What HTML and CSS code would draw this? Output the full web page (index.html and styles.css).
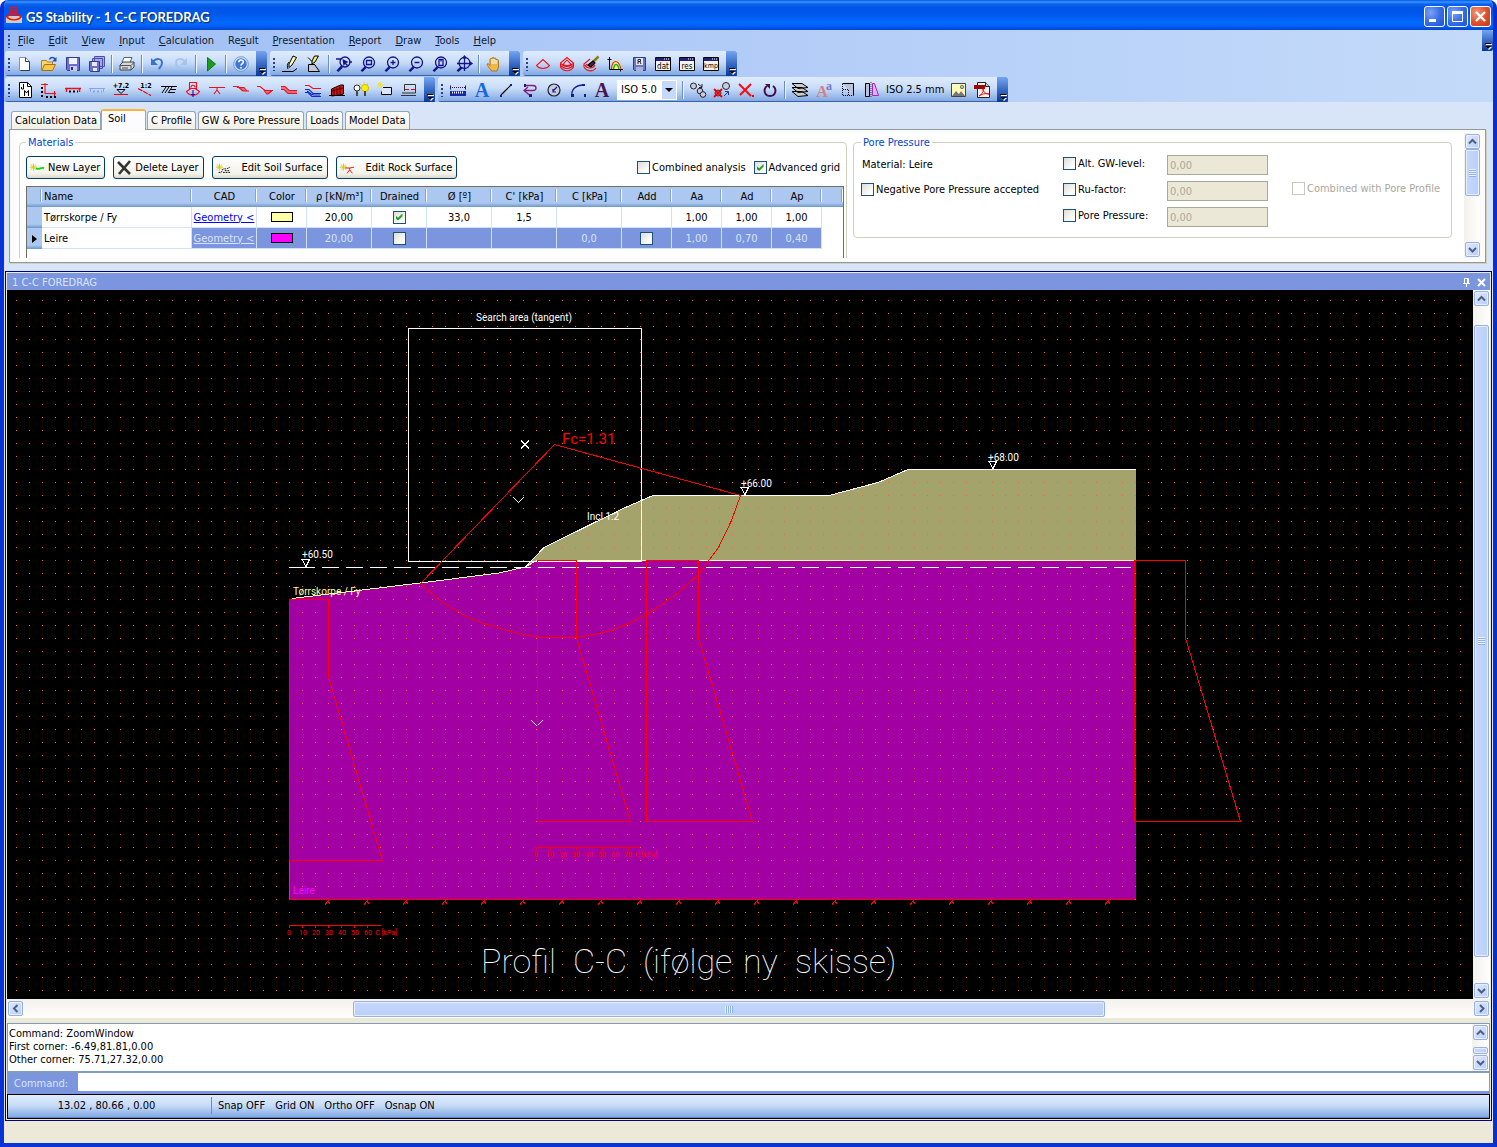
FILE: index.html
```html
<!DOCTYPE html>
<html lang="en">
<head>
<meta charset="utf-8">
<title>GS Stability - 1 C-C FOREDRAG</title>
<link rel="stylesheet" href="styles.css">
</head>
<body>
<div class="window">
  <header class="titlebar">
    <svg class="app-icon" viewBox="0 0 16 16"><path d="M0 9h16v7H0z" fill="#d0ccc4"/><path d="M4 .5h7v6H4zM5 7.500L.5 9.500c3 4.500 12 4.500 15 0L11 7.500zM5.500 6C6 2 10 2 10 6" fill="none" stroke="#f01010" stroke-width="1.400"/></svg>
    <h1>GS Stability - 1 C-C FOREDRAG</h1>
    <div class="win-buttons">
      <button class="win-btn" aria-label="Minimize"><svg viewBox="0 0 19 19"><path d="M4 12h7v3H4z" fill="#fff"/></svg></button>
      <button class="win-btn" aria-label="Maximize"><svg viewBox="0 0 19 19"><path d="M4.500 5v9.500h10V5" fill="none" stroke="#fff"/><path d="M4 4h11v3H4z" fill="#fff"/></svg></button>
      <button class="win-btn close" aria-label="Close"><svg viewBox="0 0 19 19"><path d="M5 5l9 9M14 5l-9 9" stroke="#fff" stroke-width="2.400"/></svg></button>
    </div>
  </header>

  <div class="chrome">
    <nav class="menubar">
      <span class="grip"></span>
      <a href="#"><u>F</u>ile</a><a href="#"><u>E</u>dit</a><a href="#"><u>V</u>iew</a><a href="#"><u>I</u>nput</a><a href="#"><u>C</u>alculation</a><a href="#">Re<u>s</u>ult</a><a href="#"><u>P</u>resentation</a><a href="#"><u>R</u>eport</a><a href="#"><u>D</u>raw</a><a href="#"><u>T</u>ools</a><a href="#"><u>H</u>elp</a>
      <button class="overflow" aria-label="Menu options"></button>
    </nav>

    <div class="toolrow">
      <div class="toolbar">
        <span class="grip"></span>
        <button aria-label="New"><svg viewBox="0 0 16 16"><path d="M2.500 1.500h6l4 4v9h-10z" fill="#fff" stroke="#8a94a8"/><path d="M8.500 1.500v4h4M12.500 6v8.500h-9" fill="none" stroke="#333c55"/></svg></button>
        <button aria-label="Open"><svg viewBox="0 0 16 16"><path d="M.5 14V4.500h5l1 1.500h5v3" fill="#f7d673" stroke="#b87f1c"/><path d="M.8 14.500L3.500 8.500h11l-3 6z" fill="#f9c648" stroke="#a8701a"/><path d="M8.500 3.500c1-2.500 4-2.500 5.500-.5" fill="none" stroke="#1b4fae" stroke-width="1.500"/><path d="M15.500 1v4.500H11z" fill="#1b4fae"/></svg></button>
        <button aria-label="Save"><svg viewBox="0 0 16 16"><path d="M1.500 1.500h13v13h-12l-1-1z" fill="#6a6fd0" stroke="#33389a"/><path d="M4 2h8v6H4z" fill="#f2f4ff"/><path d="M5 10h7v5H5z" fill="#c6cbe8"/><path d="M6 11h2v3H6z" fill="#262b86"/></svg></button>
        <button aria-label="Save all"><svg viewBox="0 0 16 16"><path d="M5.500 .5h10v10h-10zM3.500 2.500h10v10h-10z" fill="#a4a8e4" stroke="#4a4fa8"/><path d="M.5 5.500h10v10h-9l-1-1z" fill="#6a6fd0" stroke="#33389a"/><path d="M3 6h5v4H3zM4 12h4v3H4z" fill="#e8eaff"/></svg></button>
        <span class="sep"></span>
        <button aria-label="Print"><svg viewBox="0 0 16 16"><path d="M5 1.500h8l-2 5H3z" fill="#fff" stroke="#555c6e"/><path d="M1 9l3-3h11v5l-3 3H1z" fill="#d8d8d2" stroke="#3d424f"/><path d="M1 9.500h11M12 9.500l3-3M12 10v4M3 12h6" stroke="#4e5462" fill="none"/></svg></button>
        <span class="sep"></span>
        <button aria-label="Undo"><svg viewBox="0 0 16 16"><path d="M4 6c3-4 9-4 9 1 0 3-2 4-3 6" fill="none" stroke="#3d72cc" stroke-width="2"/><path d="M2 2v7h7z" fill="#3d72cc"/></svg></button>
        <button aria-label="Redo"><svg viewBox="0 0 16 16"><path d="M12 6C9 2 3 2 3 7c0 3 2 4 3 6" fill="none" stroke="#a8c4ee" stroke-width="2"/><path d="M14 2v7H7z" fill="#a8c4ee"/></svg></button>
        <span class="sep"></span>
        <button aria-label="Run"><svg viewBox="0 0 16 16"><path d="M4.500 1.500l8 6.500-8 7z" fill="#1f9a1f" stroke="#0a7a0a"/></svg></button>
        <span class="sep"></span>
        <button aria-label="Help"><svg viewBox="0 0 16 16"><circle cx="8" cy="8" r="6.500" fill="#3f78d6" stroke="#d3e2f8" stroke-width="1.500"/><circle cx="8" cy="8" r="7.300" fill="none" stroke="#5a7fc4" stroke-width=".7"/><path d="M5.800 6.300c0-3 4.500-3 4.500-.3C10.300 8 8 7.800 8 9.600M8 11v1.500" fill="none" stroke="#fff" stroke-width="1.600"/></svg></button>
        <button class="overflow" aria-label="Toolbar options"></button>
      </div>
      <div class="toolbar">
        <span class="grip"></span>
        <button aria-label="Draw line"><svg viewBox="0 0 16 16"><path d="M0 15.500h11l4-3" fill="none" stroke="#000"/><path d="M11 0l3.500 1.500L10 9l-3 2.500V8z" fill="#fff9a8" stroke="#000"/><path d="M7 6c-2 2-2 5-1 7" fill="none" stroke="#000"/></svg></button>
        <button aria-label="Draw surface"><svg viewBox="0 0 16 16"><path d="M2.500 15.500V8.500h6l5 7z" fill="#c4c9d6" stroke="#000"/><path d="M8.500 0h4L9 6l-3 2V5z" fill="#f5ee6a" stroke="#000"/><path d="M2 1.500l4 4M8 8l2 2" stroke="#000" fill="none"/></svg></button>
        <span class="sep"></span>
        <button aria-label="Zoom window"><svg viewBox="0 0 16 16" class="lens"><circle cx="9" cy="6" r="5"/><path d="M5.500 10L1 15M2 15.500L6.500 11M0 3h5M13 6h3"/><path class="solid" d="M6.500 3l1 7 1.500-2 2 2 1-1-2-2 2.500-1z"/></svg></button>
        <button aria-label="Zoom extents"><svg viewBox="0 0 16 16" class="lens"><circle cx="9" cy="6.500" r="5.500"/><path d="M5.500 10.500L1 15M2 15.500L6.500 11M6.500 4.500h5v4h-5z"/></svg></button>
        <button aria-label="Zoom in"><svg viewBox="0 0 16 16" class="lens"><circle cx="9" cy="6.500" r="5.500"/><path d="M5.500 10.500L1 15M2 15.500L6.500 11M9 4v5M6.500 6.500h5"/></svg></button>
        <button aria-label="Zoom out"><svg viewBox="0 0 16 16" class="lens"><circle cx="9" cy="6.500" r="5.500"/><path d="M5.500 10.500L1 15M2 15.500L6.500 11M6.500 6.500h5"/></svg></button>
        <button aria-label="Zoom page"><svg viewBox="0 0 16 16" class="lens"><circle cx="9" cy="6.500" r="5.500"/><path d="M5.500 10.500L1 15M2 15.500L6.500 11M7 3.500h4v6H7zM9 3.500v2"/></svg></button>
        <button aria-label="Zoom all"><svg viewBox="0 0 16 16" class="lens"><circle cx="8.500" cy="7" r="5.500"/><path d="M5 11L1 15M2 15.500L6.500 11.500M8.500 0v15M1 7.500h15M7 2l1.500-2L10 2M14 6l2 1.500L14 9"/></svg></button>
        <span class="sep"></span>
        <button aria-label="Pan"><svg viewBox="0 0 16 16"><path d="M5 14C3 12 1.500 9.500 1 8c1-.8 2 0 3 1.500V3c1-1 2-.5 2 0v-1c1-1 2-.5 2 0v.5c1-.8 2-.5 2 .5v1c1-.8 2.500-.5 2.500.5V11l-1.500 4H5.500z" fill="#f0b84a" stroke="#a8782a"/><path d="M6 3v5M8 3v5M10 4v4" stroke="#fff" fill="none"/></svg></button>
        <button class="overflow" aria-label="Toolbar options"></button>
      </div>
      <div class="toolbar">
        <span class="grip"></span>
        <button aria-label="Search area"><svg viewBox="0 0 16 16" class="red"><path d="M8 3.500L1.500 9.500c3 4 10 4 13 0z"/></svg></button>
        <button aria-label="Surfaces"><svg viewBox="0 0 16 16" class="red"><path d="M8 1.500L1.500 7v4c3 5 10 5 13 0V7zM8 4L4 8.500c2 1.500 6 1.500 8 0zM2 9.500c3 4 9 4 12 0M2 7.500c3 4 9 4 12 0"/></svg></button>
        <button aria-label="Edit surfaces"><svg viewBox="0 0 16 16" class="red"><path d="M7 3L1 8v3c3 5 9 5 12 1M2 9c2 4 8 4 10 0M3 8c2 3 6 3 8 0"/><path class="brush" d="M15.500 .5L10 6"/><path class="bristle" d="M10 5l-5 4 3 2 4-4z"/></svg></button>
        <button aria-label="Distribution"><svg viewBox="0 0 16 16"><path d="M2.500 1v12.500H16M.5 3.500h4M13.500 11.500v4" fill="none" stroke="#000"/><path d="M4 13c1-11 8-11 11 0z" fill="#ff6"/><path d="M4.500 13c1-10 7-10 9.500 0" fill="none" stroke="#f02020" stroke-width="1.200"/><path d="M6.500 13c1-6 4-6 5.500 0" fill="none" stroke="#10b040" stroke-width="1.500"/></svg></button>
        <button aria-label="Save result"><svg viewBox="0 0 16 16"><path d="M2.500 1.500h12v13h-11l-1-1z" fill="#6c78c4" stroke="#303a90"/><path d="M5 2h7v7H5z" fill="#e4e8f8"/><path d="M7 8V3.500h2.500v2H7M9 6l1 2" stroke="#222" fill="none"/><path d="M5 11h7v4H5z" fill="#aab2d8"/></svg></button>
        <button aria-label="Data file"><svg viewBox="0 0 16 16"><path d="M.5 1.500h15v13H.5z" fill="#f4f4ec" stroke="#000"/><path d="M1 2h14v3H1z" fill="#22227a"/><path d="M9 3h1M11 3h1M13 3h1" stroke="#fff"/><text x="8" y="13" class="file-tag">dat</text></svg></button>
        <button aria-label="Result file"><svg viewBox="0 0 16 16"><path d="M.5 1.500h15v13H.5z" fill="#f4f4ec" stroke="#000"/><path d="M1 2h14v3H1z" fill="#22227a"/><path d="M9 3h1M11 3h1M13 3h1" stroke="#fff"/><text x="8" y="13" class="file-tag">res</text></svg></button>
        <button aria-label="Kmp file"><svg viewBox="0 0 16 16"><path d="M.5 1.500h15v13H.5z" fill="#f4f4ec" stroke="#000"/><path d="M1 2h14v3H1z" fill="#22227a"/><path d="M9 3h1M11 3h1M13 3h1" stroke="#fff"/><text x="8" y="12" class="file-tag narrow">kmp</text></svg></button>
        <button class="overflow" aria-label="Toolbar options"></button>
      </div>
    </div>

    <div class="toolrow last">
      <div class="toolbar">
        <span class="grip"></span>
        <button aria-label="Model"><svg viewBox="0 0 16 16"><path d="M2.500 .5h8l4 4v11h-12z" fill="#fff" stroke="#000"/><path d="M10.500 .5v4h4" fill="none" stroke="#000"/><path d="M4.500 5v2h2V2M7.500 14V8.500l2 2.500 2-2.500V14" fill="none" stroke="#000"/></svg></button>
        <button aria-label="Profile"><svg viewBox="0 0 16 16" class="red"><path d="M4 1v10.500h11M0 2.500h7M13.500 9v5"/><path class="dots" d="M1 5v10M5 15h10"/></svg></button>
        <button aria-label="Surface line"><svg viewBox="0 0 16 16"><path d="M0 6.500h16M1.500 6v4M14.500 6v4" stroke="#e8101c" stroke-width="1.500"/><path d="M4 9.500h9" stroke="#000" stroke-width="2" stroke-dasharray="2 2"/></svg></button>
        <button aria-label="Hidden line"><svg viewBox="0 0 16 16"><path d="M0 6.500h16M1.500 6v4M14.500 6v4" stroke="#8aa4e8"/><path d="M4 9.500h9" stroke="#8aa4e8" stroke-width="2" stroke-dasharray="2 2"/></svg></button>
        <button aria-label="Level"><svg viewBox="0 0 16 16"><text x="8" y="6" class="tiny">+7.2</text><path d="M4 7.500h8l-4 4z" fill="none" stroke="#000"/><path d="M1 12.500h14" stroke="#e00"/></svg></button>
        <button aria-label="Inclination"><svg viewBox="0 0 16 16"><text x="9" y="6" class="tiny">1:2</text><path d="M1 6.500l13 7" stroke="#e00" stroke-width="1.200" stroke-dasharray="5 1"/></svg></button>
        <button aria-label="Hatch"><svg viewBox="0 0 16 16"><path d="M0 4.500h16M9 7.500h6M8 10.500h6M1 11l4-6M4 11l4-6M7 11l4-6" stroke="#000" fill="none"/></svg></button>
        <button aria-label="Slip surface"><svg viewBox="0 0 16 16" class="red"><path d="M4.500 .5h7v6h-7zM6 6.500L1.500 9.500c3 5 10 5 13 0L10 6.500M6 5.500c0-3 4-3 4 0"/><path d="M8 8v7M6 12.500h4" stroke="#409"/></svg></button>
        <button aria-label="Water line"><svg viewBox="0 -2 16 16" class="red"><path d="M0 3.500h16M8 4v3M8 6l-3 4M8 6l3 4"/></svg></button>
        <button aria-label="Layer 1"><svg viewBox="0 -1 16 16" class="red"><path d="M0 3.500h5l5 4.500h6M4 4.500h7l3 3.500"/><path class="hatch" d="M5 4.500h6l2 3.500h-4z"/></svg></button>
        <button aria-label="Layer 2"><svg viewBox="0 -1 16 16" class="red"><path d="M0 3.500h3l5 4h8M7 7.500l3 3.500h1l4-3.500"/><path class="hatch" d="M8 8h7l-3 3h-2z"/></svg></button>
        <button aria-label="Layer 3"><svg viewBox="0 -1 16 16" class="red"><path d="M0 3.500h4l4 4h8M0 6.500h3l4 4h9"/><path class="hatch" d="M0 4h4l4 4h8v2H7L3 6H0z"/></svg></button>
        <button aria-label="Layer 4"><svg viewBox="0 0 16 16" class="red"><path d="M0 3.500h4l4 3h8"/><path d="M0 7.500h4l4 4h8M0 10.500h3l4 4h9M2 9l4 3 3 1h6" stroke="#1028c8"/></svg></button>
        <button aria-label="Wall"><svg viewBox="0 0 16 16"><path d="M2.500 7l9-4h3v9l-4 1-8 1z" fill="#d01818" stroke="#000"/><path d="M5 7v6M8 6v7M11 4v8M3 9l11-3" stroke="#500" fill="none"/><path d="M0 13.500h16" stroke="#000"/></svg></button>
        <button aria-label="Lights"><svg viewBox="0 0 16 16"><circle cx="4" cy="6" r="3" fill="#fff" stroke="#000" stroke-width=".8"/><path d="M4 9v5M3 11h2" stroke="#444" stroke-width="1.800"/><path d="M6 1l2 2M15 1l-1 2M16 7h-2M11 0v2" stroke="#e8d800"/><circle cx="12" cy="6" r="3.500" fill="#fff200" stroke="#c0ae00" stroke-width=".8"/><path d="M12 9v5" stroke="#444" stroke-width="2"/></svg></button>
        <button aria-label="New box"><svg viewBox="0 0 16 16"><path d="M6 5.500h8.500v7H4.500v-3" fill="#dbe8fa" stroke="#000"/><path d="M3 0v6M0 3h6M1 1l4 4M5 1L1 5" stroke="#f2e400"/></svg></button>
        <button aria-label="Section"><svg viewBox="0 0 16 16"><path d="M3.500 9V2.500h11V11H1M0 13.500h15" fill="none" stroke="#333"/><path d="M4 7.500h4M10 7.500h4" stroke="#e00"/></svg></button>
        <button class="overflow" aria-label="Toolbar options"></button>
      </div>
      <div class="toolbar">
        <span class="grip"></span>
        <button aria-label="Measure"><svg viewBox="0 0 16 16"><path d="M0 5.500h16" stroke="#40103a" stroke-dasharray="1 1"/><path d="M0 3.500v4h1v-4M15 3.500v4h1v-4" fill="#102090"/><path d="M0 9h16v5H0z" fill="#1428a8"/><path d="M2 10.500h12" stroke="#fff" stroke-width="2" stroke-dasharray="1 1"/></svg></button>
        <button aria-label="Text"><svg viewBox="0 0 16 16"><text x="8" y="15" class="glyph" fill="#1668e0">A</text></svg></button>
        <button aria-label="Line"><svg viewBox="0 0 16 16"><path d="M3 13L13 3" stroke="#000" stroke-width="1.200"/><path d="M2 13h2v2H2zM12 2h2v2h-2z" fill="#102090"/></svg></button>
        <button aria-label="Polyline"><svg viewBox="0 0 16 16"><path d="M3 3.500h8c4 0 4 5 0 5H2M6 5L2 8.500l6 5" fill="none" stroke="#8a1a78" stroke-width="1.300"/><path d="M2 2h2v3H2zM7 12h3v3H7z" fill="#301080"/></svg></button>
        <button aria-label="Circle"><svg viewBox="0 0 16 16"><circle cx="8" cy="8" r="6" fill="#c8cede" stroke="#223" stroke-width="1.200"/><path d="M7 9l4-4M7 7v3h3" stroke="#102090" stroke-width="1.200" fill="none"/></svg></button>
        <button aria-label="Arc"><svg viewBox="0 0 16 16"><path d="M2 14C1 8 5 3 14 3" fill="none" stroke="#102090" stroke-width="1.300"/><path d="M1 12h3v3H1zM12 2h3v2h-3zM14 12h2v3h-2z" fill="#102090"/></svg></button>
        <button aria-label="Text style"><svg viewBox="0 0 16 16"><text x="8" y="15" class="glyph" fill="#4b1250">A</text></svg></button>
        <span class="select-wrap"><select aria-label="Dimension style"><option>ISO 5.0</option></select><svg viewBox="0 0 14 18"><path d="M3 7h8l-4 4z" fill="#000"/></svg></span>
        <span class="sep"></span>
        <button aria-label="Copy"><svg viewBox="0 0 16 16"><circle cx="3.500" cy="4" r="3" fill="#ccd" stroke="#223"/><circle cx="10" cy="9" r="2.800" fill="#ccd" stroke="#223"/><circle cx="13" cy="12.500" r="2.800" fill="#ccd" stroke="#223"/><path d="M8 2l4 3M12 2v3.500H9" stroke="#223" fill="none"/></svg></button>
        <button aria-label="Move"><svg viewBox="0 0 16 16"><circle cx="12" cy="4" r="3.500" fill="#ccd" stroke="#223"/><circle cx="4" cy="11" r="3" fill="#ccd" stroke="#223"/><path d="M0 7l8 8M8 7l-8 8" stroke="#e00" stroke-width="1.800"/><path d="M10 14l4-4M11 9.500h3.500V13" stroke="#223a90" fill="none"/></svg></button>
        <button aria-label="Delete"><svg viewBox="0 0 16 16"><path d="M1 2l12 12M13 2L2 13" stroke="#f01010" stroke-width="2"/><path d="M14 14h2" stroke="#e00" stroke-width="2"/></svg></button>
        <button aria-label="Rotate"><svg viewBox="0 0 16 16"><path d="M5 4c-4 3-3 10 3 10s7-7 3-10" fill="none" stroke="#401048" stroke-width="2"/><path d="M3 2h5v5z" fill="#401048"/></svg></button>
        <span class="sep"></span>
        <button aria-label="Layers"><svg viewBox="0 0 16 16"><path d="M0 9.500h10l6 4-10 1zM0 5.500h10l6 4-10 1zM0 1.500h10l6 4-10 1z" fill="#c9ccc8" stroke="#000"/></svg></button>
        <button aria-label="Fonts"><svg viewBox="0 0 16 16"><text x="6" y="15" class="glyph medium" fill="#d88080">A</text><text x="13" y="8" class="glyph small" fill="#7a74c8">a</text></svg></button>
        <button aria-label="Scale"><svg viewBox="0 0 16 16"><path d="M2.500 1.500h11v12" fill="#b8c4dc" stroke="#000"/><path d="M2.500 2v11.500h11M3 7.500h5.500v6" fill="none" stroke="#000" stroke-dasharray="1 1"/></svg></button>
        <button aria-label="Mirror"><svg viewBox="0 0 16 16"><path d="M1.500 1.500h4v13h-4z" fill="#b8c4dc" stroke="#000"/><path d="M8.500 1.500h2l4 12h-6z" fill="#c8c0e8" stroke="#b020c8"/><path d="M7 0v16" stroke="#333" stroke-dasharray="1 1"/></svg></button>
        <span class="tool-label">ISO 2.5 mm</span>
        <button aria-label="Image"><svg viewBox="0 0 16 16"><path d="M1.500 1.500h14v13h-14z" fill="#fbfbb8" stroke="#444"/><path d="M2 14l4-5 3 3 2-3 4 5z" fill="#777"/><circle cx="12" cy="5" r="1.700" fill="#bbb" stroke="#555" stroke-width=".7"/></svg></button>
        <button aria-label="PDF"><svg viewBox="0 0 16 16"><path d="M3.500 .5h8l4 4v11h-12z" fill="#f4f0ee" stroke="#222"/><path d="M0 3h11v4H0z" fill="#a00808"/><path d="M5 14c3-2 5-5 4-7 0 3 3 5 6 5-4-1-7 0-10 2z" fill="none" stroke="#e01818"/><path d="M11.500 .5v4h4" fill="#ccc" stroke="#222"/></svg></button>
        <button class="overflow" aria-label="Toolbar options"></button>
      </div>
    </div>
  </div>

  <section class="input-area">
    <div class="tabs" role="tablist">
      <button role="tab">Calculation Data</button><button role="tab" class="active" aria-selected="true">Soil</button><button role="tab">C Profile</button><button role="tab">GW &amp; Pore Pressure</button><button role="tab">Loads</button><button role="tab">Model Data</button>
    </div>
    <div class="tab-page">
      <div class="tab-content">
        <fieldset class="materials">
          <legend>Materials</legend>
          <div class="actions">
            <button class="xp-btn"><svg viewBox="0 0 18 16"><path class="spark" d="M5 3v8M1 7h8M2 4l6 6M8 4l-6 6"/><path d="M8 8c2 3 4-1 9 0" fill="none" stroke="#00e010" stroke-width="2"/></svg>New Layer</button>
            <button class="xp-btn"><svg viewBox="0 0 16 16"><path d="M2 2l12 12M14 1L3 14" stroke="#333" stroke-width="2.600"/></svg>Delete Layer</button>
            <button class="xp-btn wide"><svg viewBox="0 0 18 16"><path class="spark" d="M5 3v8M1 7h8M2 4l6 6M8 4l-6 6"/><path d="M4 13h3l2-4h4l4-2M9 13h8M11 11h6" fill="none" stroke="#000" stroke-dasharray="2 1"/></svg>Edit Soil Surface</button>
            <button class="xp-btn wide"><svg viewBox="0 0 18 16"><path class="spark" d="M5 3v8M1 7h8M2 4l6 6M8 4l-6 6"/><path d="M7 8h5l5-1M12 8v2l-3 4M12 10l3 4" fill="none" stroke="#e00"/></svg>Edit Rock Surface</button>
            <label class="check push"><input type="checkbox">Combined analysis</label>
            <label class="check"><input type="checkbox" checked>Advanced grid</label>
          </div>
          <div class="grid-box">
          <table class="grid">
            <colgroup><col class="c-head"><col class="c-name"><col class="c-65"><col class="c-50"><col class="c-65"><col class="c-55"><col class="c-65"><col class="c-65"><col class="c-65"><col class="c-50"><col class="c-50"><col class="c-50"><col class="c-50"><col></colgroup>
            <thead><tr><th></th><th class="left">Name</th><th>CAD</th><th>Color</th><th>ρ [kN/m³]</th><th>Drained</th><th>Ø [º]</th><th>C' [kPa]</th><th>C [kPa]</th><th>Add</th><th>Aa</th><th>Ad</th><th>Ap</th><th></th></tr></thead>
            <tbody>
              <tr><th></th><td class="left">Tørrskorpe / Fy</td><td><a href="#">Geometry &lt;</a></td><td><span class="swatch sand"></span></td><td>20,00</td><td><input type="checkbox" aria-label="Drained" checked></td><td>33,0</td><td>1,5</td><td></td><td></td><td>1,00</td><td>1,00</td><td>1,00</td><td class="rest"></td></tr>
              <tr class="selected"><th><span class="pointer"></span></th><td class="left">Leire</td><td><a href="#">Geometry &lt;</a></td><td><span class="swatch clay"></span></td><td>20,00</td><td><input type="checkbox" aria-label="Drained"></td><td></td><td></td><td>0,0</td><td><input type="checkbox" aria-label="Add"></td><td>1,00</td><td>0,70</td><td>0,40</td><td class="rest"></td></tr>
            </tbody>
          </table>
          </div>
        </fieldset>
        <fieldset class="pore">
          <legend>Pore Pressure</legend>
          <div class="pore-cols">
            <div class="pore-a"><span>Material: Leire</span><label class="check"><input type="checkbox">Negative Pore Pressure accepted</label></div>
            <div class="pore-b">
              <label class="check"><input type="checkbox">Alt. GW-level:</label><input class="num" type="text" value="0,00" aria-label="Alt. GW-level" disabled>
              <label class="check"><input type="checkbox">Ru-factor:</label><input class="num" type="text" value="0,00" aria-label="Ru-factor" disabled>
              <label class="check"><input type="checkbox">Pore Pressure:</label><input class="num" type="text" value="0,00" aria-label="Pore Pressure" disabled>
            </div>
            <label class="check off"><input type="checkbox" disabled>Combined with Pore Profile</label>
          </div>
        </fieldset>
        <div class="vscroll">
          <button class="sb" aria-label="Scroll up"><svg viewBox="0 0 9 9"><path d="M1 6.500L4.500 3 8 6.500"/></svg></button>
          <span class="thumb short"></span><span class="space"></span>
          <button class="sb" aria-label="Scroll down"><svg viewBox="0 0 9 9"><path d="M1 3l3.500 3.500L8 3"/></svg></button>
        </div>
      </div>
    </div>
  </section>

  <main class="document">
    <div class="doc-title"><span>1 C-C FOREDRAG</span>
      <button aria-label="Pin"><svg viewBox="0 0 9 9"><path d="M2.500 5V.5h4V5M1 5.500h7M4.500 5.500V9M5.500 1v4" fill="none" stroke="#fff"/></svg></button>
      <button aria-label="Close view"><svg viewBox="0 0 9 9"><path d="M1 1l7 7M8 1L1 8" stroke="#fff" stroke-width="2"/></svg></button>
    </div>
    <div class="view">
      <div class="canvas">
      <svg class="drawing" viewBox="7 290 1466 709" preserveAspectRatio="xMinYMin slice">
        <defs>
          <pattern id="dots" patternUnits="userSpaceOnUse" x="3" y="1" width="13" height="13"><rect width="1" height="1" fill="#ff6040"/></pattern>
          <path id="rock" d="M0 0v1l-3 4M0 1l2 3"/>
          <path id="level" d="M-4 -7.500h7.500L0 -.5z"/>
        </defs>
        <rect x="7" y="290" width="1466" height="709" fill="#000"/>
        <path fill="#a300a3" d="M289 599l131-16 79-10 26-6 12-7h599v339H289z"/>
        <path fill="#a3a36b" d="M525 567l19-20 79-39 30-13h176l49-13 30-13h228v91H537z"/>
        <g>
          <rect x="7" y="290" width="692" height="511" fill="url(#dots)"/>
          <rect x="698" y="290" width="775" height="511" fill="url(#dots)" transform="translate(1 0)"/>
          <rect x="7" y="800" width="692" height="199" fill="url(#dots)" transform="translate(0 1)"/>
          <rect x="698" y="800" width="775" height="199" fill="url(#dots)" transform="translate(1 1)"/>
        </g>
        <g class="line yellow"><path d="M292 598.500L420 583l79-10 26-6 12-6.500h598.500"/></g>
        <g class="line white">
          <path d="M525 567.500l19-20 79-39 30-13h176l49-13 30-13h227.500"/>
          <path d="M408.500 328.500h233v233h-233zM289 567.500h26"/>
          <path d="M322 567.500h813" stroke-dasharray="17 7"/>
          <path d="M521 440.500l8 8M529 440.500l-8 8M513 497l5.500 5.500L524 497M531 720l6 6 6-6"/>
          <use href="#level" x="306" y="567"/><use href="#level" x="745" y="495"/><use href="#level" x="993" y="469"/>
        </g>
        <g class="line crimson">
          <path d="M420.500 583.500l134-139 186 51-9 25-13 27-20 27-20 18-31 22-35 16-35 7h-40l-27-6-39-12-30-18z"/>
          <path d="M289.500 599.500h39V677l54 183.500h-93z"/>
          <path d="M537.500 560.500h39V638l54 183.500h-93z"/>
          <path d="M646.500 560.500h52V638l54 183.500h-106z"/>
          <path d="M1134.500 560.500h51V638l55 183.500h-106z"/>
          <path d="M289 899.500h846M289 925.500h92M535 847.500h105"/>
          <path d="M289.500 926v2M302.500 926v2M315.500 926v2M328.500 926v2M341.500 926v2M354.500 926v2M367.500 926v2M536.500 848v2M550.500 848v2M563.500 848v2M576.500 848v2M589.500 848v2M602.500 848v2M615.500 848v2M628.500 848v2"/>
          <use href="#rock" x="328" y="900"/><use href="#rock" x="367" y="900"/><use href="#rock" x="406" y="900"/><use href="#rock" x="445" y="900"/><use href="#rock" x="484" y="900"/><use href="#rock" x="523" y="900"/><use href="#rock" x="562" y="900"/><use href="#rock" x="601" y="900"/><use href="#rock" x="640" y="900"/><use href="#rock" x="679" y="900"/><use href="#rock" x="718" y="900"/><use href="#rock" x="757" y="900"/><use href="#rock" x="796" y="900"/><use href="#rock" x="835" y="900"/><use href="#rock" x="874" y="900"/><use href="#rock" x="913" y="900"/><use href="#rock" x="952" y="900"/><use href="#rock" x="991" y="900"/><use href="#rock" x="1030" y="900"/><use href="#rock" x="1069" y="900"/><use href="#rock" x="1108" y="900"/>
        </g>
        <path d="M289.500 861v38" stroke="#f0f"/>
        <g class="cad">
          <text x="476" y="321">Search area (tangent)</text>
          <text x="302" y="558">+60.50</text>
          <text x="741" y="487">+66.00</text>
          <text x="988" y="461">+68.00</text>
          <text x="587" y="520">Incl 1:2</text>
          <text x="293" y="595" fill="#ffffa0">Tørrskorpe / Fy</text>
          <text x="293" y="894" fill="#f0f">Leire</text>
          <text x="562" y="444" class="fc">Fc=1.31</text>
          <text y="973" class="caption"><tspan x="481">Profil</tspan> <tspan x="573">C-C</tspan> <tspan x="643">(ifølge</tspan> <tspan x="743">ny</tspan> <tspan x="795">skisse)</tspan></text>
        </g>
        <g class="axis">
          <text x="289" y="935">0</text><text x="303" y="935">10</text><text x="316" y="935">20</text><text x="329" y="935">30</text><text x="342" y="935">40</text><text x="355" y="935">50</text><text x="368" y="935">60</text><text x="386" y="935">C [kPa]</text>
          <text x="536" y="857">0</text><text x="550" y="857">10</text><text x="563" y="857">20</text><text x="576" y="857">30</text><text x="589" y="857">40</text><text x="602" y="857">50</text><text x="615" y="857">60</text><text x="628" y="857">70</text><text x="646" y="857">C [kPa]</text>
        </g>
      </svg>
      </div>
      <div class="vscroll big">
        <button class="sb" aria-label="Scroll up"><svg viewBox="0 0 9 9"><path d="M1 6.500L4.500 3 8 6.500"/></svg></button>
        <span class="lead"></span><span class="thumb"></span><span class="trail"></span>
        <button class="sb" aria-label="Scroll down"><svg viewBox="0 0 9 9"><path d="M1 3l3.500 3.500L8 3"/></svg></button>
      </div>
    </div>
    <div class="hscroll">
      <button class="sb" aria-label="Scroll left"><svg viewBox="0 0 9 9"><path d="M6.500 1L3 4.500 6.500 8"/></svg></button>
      <span class="lead"></span><span class="thumb"></span><span class="trail"></span>
      <button class="sb" aria-label="Scroll right"><svg viewBox="0 0 9 9"><path d="M3 1l3.500 3.500L3 8"/></svg></button>
    </div>
    <div class="console">
      <div class="log"><p>Command: ZoomWindow</p><p>First corner: -6.49,81.81,0.00</p><p>Other corner: 75.71,27.32,0.00</p></div>
      <div class="vscroll">
        <button class="sb" aria-label="Scroll up"><svg viewBox="0 0 9 9"><path d="M1 6.500L4.500 3 8 6.500"/></svg></button>
        <span class="space"></span><span class="thumb tiny-thumb"></span>
        <button class="sb" aria-label="Scroll down"><svg viewBox="0 0 9 9"><path d="M1 3l3.500 3.500L8 3"/></svg></button>
      </div>
    </div>
    <div class="command"><label for="cmd">Command:</label><input id="cmd" type="text"></div>
    <div class="status"><span class="coords">13.02 , 80.66 , 0.00</span><button>Snap OFF</button><button>Grid ON</button><button>Ortho OFF</button><button>Osnap ON</button></div>
  </main>
  <div class="base"></div>
</div>
</body>
</html>
```
FILE: styles.css
```css
* { box-sizing: border-box; }
body {
  margin: 0;
  background: #fff;
  font: 11px/13px "DejaVu Sans Condensed", "Noto Sans", sans-serif;
  color: #000;
}
button, input, select { font: inherit; color: inherit; margin: 0; padding: 0; }
button { border: 0; background: none; }
p { margin: 0; }

.window {
  min-height: 100vh;
  display: flex;
  flex-direction: column;
  border: 4px solid #0a3fe0;
  border-top: 0;
  border-left-color: #0831d9;
  border-right-color: #0a2fd0;
  border-bottom-color: #0a34d8;
  border-radius: 8px 8px 0 0;
  overflow: hidden;
  background: #d8e4f8;
}

/* title bar */
.titlebar {
  height: 30px;
  margin: 0 -4px;
  padding: 3px 6px 0 6px;
  display: flex;
  align-items: center;
  background: linear-gradient(#0058e6 0, #3a93ff 2px, #0a62ee 4px, #0055e5 8px, #0058ec 14px, #026afe 23px, #0360f8 26px, #0144d0 30px);
}
.app-icon { width: 16px; height: 16px; margin-bottom: 4px; }
.titlebar h1 {
  margin: 0 0 0 4px;
  font: bold 13px/20px Lato, "Open Sans", sans-serif;
  color: #fff;
  text-shadow: 1px 1px 1px #0a246a;
}
.win-buttons { display: flex; gap: 2px; margin-left: auto; }
.win-btn {
  width: 21px;
  height: 21px;
  border: 1px solid #fff;
  border-radius: 3px;
  background: radial-gradient(circle at 30% 30%, #7ba2f5, #3a6ee8 50%, #1c50d8);
}
.win-btn.close { background: radial-gradient(circle at 30% 30%, #f09a7c, #e2532f 50%, #c03a16); }
.win-btn svg { display: block; width: 19px; height: 19px; }

/* menus and toolbars */
.chrome { background: linear-gradient(90deg, #9ebef5, #b6cff8 60%, #c3daf9); }
.menubar { height: 21px; display: flex; align-items: center; gap: 14px; padding-left: 1px; }
.menubar .grip { margin-right: -9px; }
.menubar a { color: #0c1c30; text-decoration: none; }
.menubar .overflow { margin: 0 0 0 auto; align-self: stretch; }
.toolrow { height: 26px; display: flex; gap: 3px; padding-left: 1px; }
.toolrow.last { height: 25px; }
.toolbar {
  height: 25px;
  display: flex;
  align-items: center;
  background: linear-gradient(#dfecfe, #c8dcf9 45%, #81a9e2 96%, #3b61a8 97%);
  border-radius: 3px 0 0 3px;
}
.grip {
  width: 8px;
  height: 14px;
  background: radial-gradient(circle at 50% 50%, #27418a 1px, transparent 1px) 0 0 / 8px 4px;
}
.toolbar button { width: 24px; height: 24px; display: flex; align-items: center; justify-content: center; }
.toolbar button svg { width: 16px; height: 16px; overflow: visible; }
.toolbar button.overflow, .overflow {
  position: relative;
  width: 11px;
  height: auto;
  align-self: stretch;
  margin-left: 3px;
  border-radius: 0 2px 2px 0;
  background: linear-gradient(#75a6f1, #3b6bc4 50%, #053995);
}
.overflow::before {
  content: "";
  position: absolute;
  left: 3px;
  bottom: 2px;
  border: 3px solid transparent;
  border-top-color: #000;
  border-bottom: 0;
  filter: drop-shadow(1px 1px 0 #fff);
}
.overflow::after {
  content: "";
  position: absolute;
  left: 3px;
  bottom: 7px;
  width: 6px;
  height: 1px;
  background: #000;
  box-shadow: 1px 1px 0 #fff;
}
.sep { width: 6px; height: 18px; border-left: 2px solid transparent; background: linear-gradient(90deg, #6a8ccb 1px, #f1f9ff 1px, #f1f9ff 2px, transparent 2px) padding-box; }
.lens { fill: none; stroke: #14148a; stroke-width: 1.3px; }
.lens .solid { fill: #14148a; stroke: none; }
.red { fill: none; stroke: #f01018; stroke-width: 1.1px; }
.red .dots { stroke: #000; stroke-width: 2px; stroke-dasharray: 2px 2px; }
.red .hatch { fill: #f01018; fill-opacity: .5; stroke: none; }
.red .brush { stroke: #8a7a10; stroke-width: 2.5px; }
.red .bristle { fill: #4b1f5c; stroke: #000; }
.file-tag { font: 8px "DejaVu Sans Condensed", sans-serif; text-anchor: middle; fill: #000; }
.file-tag.narrow { font-size: 7px; }
.tiny { font: bold 7px "DejaVu Sans Condensed", sans-serif; text-anchor: middle; fill: #000; }
.glyph { font: bold 20px "Liberation Serif", serif; text-anchor: middle; }
.glyph.medium { font-size: 16px; }
.glyph.small { font-size: 12px; }
.select-wrap { position: relative; margin: 0 3px; height: 20px; }
.select-wrap select {
  appearance: none;
  width: 60px;
  height: 20px;
  border: 1px solid #fff;
  padding-left: 3px;
  background: #fff;
  border-radius: 0;
}
.select-wrap svg { position: absolute; right: 1px; top: 1px; width: 14px; height: 18px; background: #c3dafa; pointer-events: none; }
.tool-label { width: 62px; padding-left: 2px; white-space: nowrap; }

/* input tabs */
.input-area { padding: 6px 7px 8px 5px; }
.tabs { height: 21px; display: flex; align-items: flex-end; padding-left: 2px; position: relative; }
.tabs button {
  height: 18px;
  margin-right: 2px;
  padding: 0 3px;
  border: 1px solid #91a7b4;
  border-bottom: 0;
  border-radius: 3px 3px 0 0;
  background: linear-gradient(#fff, #f0efe4);
}
.tabs button.active {
  height: 21px;
  width: 45px;
  margin: 0 1px -1px -2px;
  padding: 0 4px 4px 6px;
  text-align: left;
  border-top: 2px solid #ffb13d;
  background: #fcfcfe;
}
.tab-page {
  height: 134px;
  padding: 3px 5px 4px 6px;
  border: 1px solid #919b9c;
  box-shadow: 1px 1px 0 #d0cfbf;
  background: #fbfbfc;
}
.tab-content { height: 125px; display: flex; background: #fff; overflow: hidden; }
fieldset { margin: 0; min-width: 0; border: 1px solid #d0d0bf; border-radius: 4px; }
legend { padding: 0 2px; color: #0046d5; }
.materials { flex: 0 0 828px; height: 140px; margin: 3px 0 0 3px; padding: 7px 2px 0 6px; }
.actions { display: flex; align-items: center; gap: 8px; }
.xp-btn {
  height: 23px;
  display: flex;
  align-items: center;
  gap: 3px;
  padding: 0 4px 0 2px;
  border: 1px solid #003c74;
  border-radius: 3px;
  background: linear-gradient(#fff, #f3f2ea 80%, #dcd8cc);
  white-space: nowrap;
}
.xp-btn svg { width: 16px; height: 16px; }
.xp-btn.wide svg { margin-right: 8px; }
.check { display: flex; align-items: center; gap: 2px; white-space: nowrap; }
.check.push { margin-left: auto; }
.check + .check { margin-right: 4px; }
.spark { stroke: #d8c800; fill: none; }
input[type="checkbox"] {
  appearance: none;
  width: 13px;
  height: 13px;
  flex: none;
  border: 1px solid #1d5280;
  background: linear-gradient(135deg, #dcdcd7, #fff 80%);
  display: block;
}
input[type="checkbox"]:checked::before {
  content: "";
  display: block;
  width: 7px;
  height: 7px;
  margin: 2px;
  background: #21a121;
  clip-path: polygon(0 30%, 36% 60%, 100% 0, 100% 38%, 36% 100%, 0 70%);
}
input[type="checkbox"]:disabled { border-color: #cac8bb; background: #fff; }
.grid-box { margin-top: 7px; border: 1px solid #716f64; border-bottom: 0; height: 90px; background: #fff; }
.grid { width: 100%; table-layout: fixed; border-collapse: separate; border-spacing: 0; }
.c-head { width: 15px; } .c-name { width: 150px; } .c-65 { width: 65px; } .c-55 { width: 55px; } .c-50 { width: 50px; }
.grid th, .grid td { padding: 0; height: 21px; text-align: center; font-weight: normal; white-space: nowrap; overflow: hidden; border-right: 1px solid #d0e2fa; border-bottom: 1px solid #d0e2fa; }
.grid .left { text-align: left; padding-left: 2px; }
.grid thead th { height: 20px; padding-bottom: 2px; border: 0; background: linear-gradient(90deg, transparent calc(100% - 2px), #7fa4dc calc(100% - 2px), #7fa4dc calc(100% - 1px), #fff calc(100% - 1px)) 0 2px / 100% 13px no-repeat, linear-gradient(#adc8f0 80%, #6a98cc); }
.grid tbody th { border: 0; background: linear-gradient(#adc8f0 82%, #6a98cc); }
.grid a { color: #00f; }
.grid .rest { border: 0; }
.grid input { margin: 0 auto; }
.selected td:not(.left):not(.rest) { background: #7b96df; color: #d8e4f8; }
.grid .selected a { color: #d8e4f8; }
.swatch { display: block; width: 22px; height: 10px; margin: 0 auto; border: 1px solid #000; }
.sand { background: #ffffa3; }
.clay { background: #f0f; }
.pointer { display: block; margin-left: 5px; width: 0; border: 4px solid transparent; border-left: 5px solid #000; border-right: 0; }
.pore { flex: 0 1 599px; height: 102px; margin: 3px 0 0 6px; padding: 6px 6px 0 7px; }
.pore-cols { display: flex; }
.pore-a { width: 202px; display: flex; flex-direction: column; gap: 12px; padding-top: 3px; }
.pore-a span { padding-left: 1px; }
.pore-b { display: grid; grid-template-columns: 104px 101px; row-gap: 6px; align-items: center; }
.pore-b .check, .check.off { margin: 0; }
.pore-b .check { margin-top: -4px; }
.num { width: 101px; height: 20px; border: 1px solid #aca899; background: #ebe8d7; color: #aca899; padding: 0 2px; }
.check.off { margin: 27px 0 0 24px; align-self: flex-start; color: #aca899; }

/* scroll bars */
.vscroll { display: flex; flex-direction: column; flex: none; width: 17px; padding: 1px 0; background: linear-gradient(90deg, #f3f1ec, #fefefb); }
.tab-content .vscroll { margin-left: auto; width: 16px; }
.hscroll { display: flex; height: 19px; padding: 2px 1px; background: linear-gradient(#f3f1ec, #fefefb); }
.sb, .thumb {
  flex: none;
  width: 15px;
  height: 15px;
  margin: 0 1px;
  border: 1px solid #98b0e8;
  border-radius: 2px;
  background: linear-gradient(135deg, #e0e8fd, #b8cdfb);
  box-shadow: inset 0 0 0 1px #e6eefc;
}
.sb svg { display: block; width: 9px; height: 9px; margin: 2px auto; fill: none; stroke: #4d6185; stroke-width: 2px; }
.thumb { background: linear-gradient(90deg, #c8d6fb, #b8d0fa); display: flex; align-items: center; justify-content: center; }
.thumb::before { content: ""; width: 7px; height: 8px; background: repeating-linear-gradient(#eef4fe 0 1px, #8cb0f8 1px 2px); }
.thumb.short { height: 47px; }
.tiny-thumb { height: 7px; margin-bottom: 1px; }
.tiny-thumb::before { display: none; }
.space { flex: 1; }
.big .lead { flex: 19; } .big .thumb { flex: 632; } .big .trail { flex: 26; }
.hscroll .sb { margin: 0; }
.hscroll .lead { flex: 330; } .hscroll .trail { flex: 369; }
.hscroll .thumb { flex: 751; margin: 0; height: 16px; background: linear-gradient(#c8d6fb, #b8d0fa); }
.hscroll .thumb::before { width: 8px; height: 7px; background: repeating-linear-gradient(90deg, #eef4fe 0 1px, #8cb0f8 1px 2px); }

/* document view */
.document { flex: 1; display: flex; flex-direction: column; margin: 0 1px; border: 1px solid #000080; padding: 1px; background: #ece9d8; }
.doc-title { height: 17px; display: flex; align-items: center; gap: 6px; padding: 1px 4px 0 5px; background: #7b96df; color: #d8e4f8; }
.doc-title span { flex: 1; }
.doc-title button svg { display: block; width: 9px; height: 9px; }
.view { flex: 1; min-height: 300px; display: flex; }
.canvas { flex: 1; min-width: 0; position: relative; background: #000; }
.drawing { position: absolute; inset: 0; width: 100%; height: 100%; shape-rendering: crispEdges; }
.line { fill: none; stroke-width: 1px; }
.white { stroke: #fff; } .yellow { stroke: #ffffa0; } .crimson { stroke: #f00; }
.cad { font: 10px Roboto, sans-serif; fill: #fff; }
.cad .fc { font-size: 15px; fill: #f00; }
.cad .caption { font: 100 34px Roboto, sans-serif; }
.axis { font: 7px Roboto, sans-serif; fill: #f00; text-anchor: middle; }
.console { height: 50px; margin-top: 5px; display: flex; border: 1px solid #7f9db9; border-bottom-width: 2px; background: #fff; }
.log { flex: 1; padding: 3px 1px; }
.command { display: flex; height: 21px; border-bottom: 3px solid #7b96df; background: #fff; }
.command label { width: 71px; padding: 4px 0 0 7px; background: #7b96df; color: #d8e4f8; }
.command input { flex: 1; border: 0; border-right: 1px solid #7f9db9; background: #fff; outline: 0; }
.status { height: 25px; display: flex; align-items: center; gap: 10px; padding-bottom: 2px; border: 1px solid #000; background: linear-gradient(#dfecfe, #c8dcf9 45%, #81a9e2 96%, #3b61a8); }
.coords { width: 204px; padding: 2px 6px 2px 0; text-align: center; border-right: 1px solid #6a8ccb; margin-right: -4px; }
.base { height: 22px; background: #ece9d8; }
```
